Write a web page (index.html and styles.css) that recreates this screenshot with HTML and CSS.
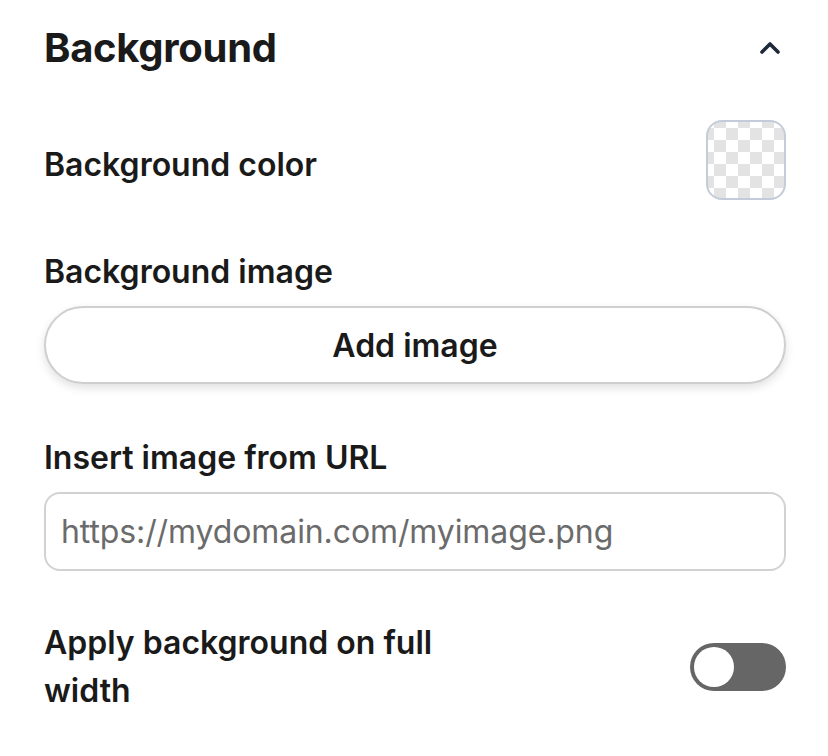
FILE: index.html
```html
<!DOCTYPE html>
<html>
<head>
<meta charset="utf-8">
<link rel="stylesheet" href="styles.css">
</head>
<body>
<div class="panel">
  <div class="header">
    <h2 class="title">Background</h2>
    <svg class="chevron" width="24" height="24" viewBox="0 0 24 24"><path d="M4 16 L12 8 L20 16" fill="none" stroke="#1e2a3a" stroke-width="3.6" stroke-linecap="round" stroke-linejoin="round"/></svg>
  </div>
  <div class="row color-row">
    <span class="label offset">Background color</span>
    <div class="swatch"></div>
  </div>
  <div class="field image-field">
    <span class="label">Background image</span>
    <button class="add-btn">Add image</button>
  </div>
  <div class="field url-field">
    <span class="label">Insert image from URL</span>
    <input class="url-input" type="text" placeholder="https://mydomain.com/myimage.png">
  </div>
  <div class="row toggle-row">
    <span class="label wrap">Apply background on full width</span>
    <div class="toggle"><div class="knob"></div></div>
  </div>
</div>
</body>
</html>
```
FILE: styles.css
```css
* { box-sizing: border-box; }
html, body { margin: 0; padding: 0; background: #fff; }
body { font-family: Inter, "Noto Sans", sans-serif; color: #1a1a1a; }
.panel { padding: 24px 42px 0 44px; display: flex; flex-direction: column; }
.header { display: flex; justify-content: space-between; align-items: center; height: 48px; }
.title { margin: 0; font-size: 40px; font-weight: 700; line-height: 48px; letter-spacing: -0.3px; }
.chevron { margin-right: 4px; }
.row { display: flex; justify-content: space-between; align-items: center; }
.color-row { margin-top: 48px; }
.label { font-size: 32px; font-weight: 600; line-height: 48px; letter-spacing: 0; }
.offset { margin-top: 10px; }
.swatch { width: 80px; height: 80px; border: 2px solid #c3ccd8; border-radius: 16px;
  background-color: #fff;
  background-image: conic-gradient(#e3e3e3 25%, transparent 0 50%, #e3e3e3 0 75%, transparent 0);
  background-size: 24px 24px; background-position: 6px 6px; }
.field { display: flex; flex-direction: column; }
.field .label { margin-bottom: 10px; }
.image-field { margin-top: 48px; }
.add-btn { height: 78px; border: 2px solid #cfcfcf; border-radius: 40px; background: #fff;
  font-family: inherit; font-size: 32px; font-weight: 600; color: #1a1a1a;
  box-shadow: 0 4px 10px rgba(0,0,0,0.12); }
.url-field { margin-top: 50px; }
.url-input { height: 79px; border: 2px solid #d2d2d2; border-radius: 16px; padding: 0 15px;
  font-family: inherit; font-size: 32px; letter-spacing: -0.1px; color: #333; outline: none; }
.url-input::placeholder { color: #6b6b6b; }
.toggle-row { margin-top: 48px; }
.wrap { width: 440px; }
.toggle { width: 96px; height: 48px; border-radius: 24px; background: #666; padding: 4px; }
.knob { width: 40px; height: 40px; border-radius: 50%; background: #fff; }
```
